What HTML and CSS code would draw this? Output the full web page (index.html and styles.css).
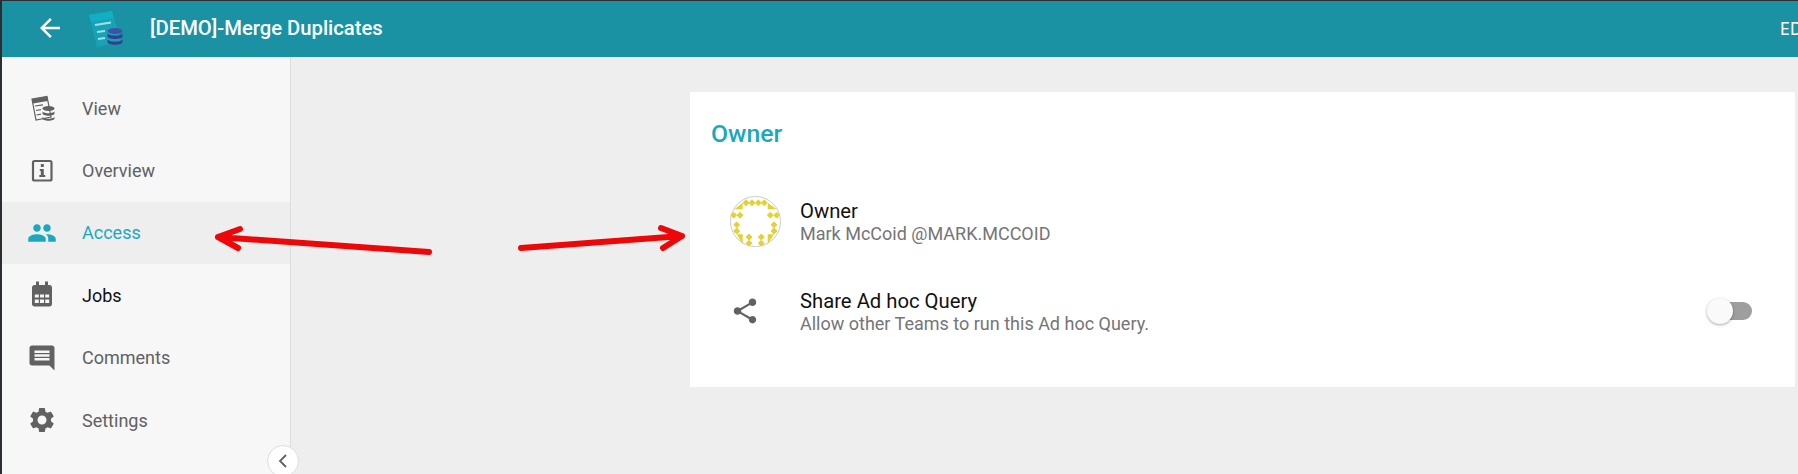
FILE: index.html
```html
<!DOCTYPE html>
<html lang="en">
<head>
  <meta charset="UTF-8">
  <meta name="viewport" content="width=device-width, initial-scale=1.0">
  <title>[DEMO]-Merge Duplicates</title>
  <link rel="stylesheet" href="styles.css">
</head>
<body>
  <header class="topbar">
    <svg class="back-icon" viewBox="0 0 24 24"><path d="M20 11H7.830l5.590-5.590L12 4l-8 8 8 8 1.410-1.410L7.830 13H20v-2z"/></svg>
    <svg class="logo" viewBox="0 0 36 36">
      <path class="logo-page" d="M1 4 24 0 33 31 9 36z"/>
      <path class="logo-head" d="M1 4 24 0 26 7 3 11z"/>
      <path class="logo-line" d="M7 14 23 11.500M9 21 17 20M10 28 17 27" />
      <ellipse class="logo-db-top" cx="27" cy="20" rx="7.500" ry="3"/>
      <path class="logo-db" d="M19.500 22v3.500c0 1.500 3.400 2.500 7.500 2.500s7.500-1 7.500-2.500V22c0 1.500-3.400 2.600-7.500 2.600s-7.500-1.100-7.500-2.600zM19.500 28v3c0 1.500 3.400 2.800 7.500 2.800s7.500-1.300 7.500-2.800v-3c0 1.500-3.400 2.600-7.500 2.600s-7.500-1.100-7.500-2.600z"/>
    </svg>
    <h1 class="page-title">[DEMO]-Merge Duplicates</h1>
    <span class="edit-btn">EDIT</span>
  </header>

  <div class="layout">
    <nav class="sidebar">
      <a class="nav-item">
        <svg class="nav-icon" viewBox="0 0 30 30">
          <path class="view-page" d="M5 6 20 3.500 24 24 9 27z"/>
          <path d="M5 6 20 3.500 20.800 8 5.800 10.500z"/>
          <path class="view-line" d="M8 13 16 11.800M9 17.500 14 16.700M9.500 22 14 21.200"/>
          <ellipse cx="21.500" cy="15.500" rx="6" ry="2.500"/>
          <path d="M15.500 18v2.500c0 1.300 2.700 2.200 6 2.200s6-.9 6-2.200V18c0 1.300-2.700 2.200-6 2.200s-6-.9-6-2.200zM15.500 23.500v2c0 1.300 2.700 2.200 6 2.200s6-.9 6-2.200v-2c0 1.300-2.700 2.200-6 2.200s-6-.9-6-2.200z"/>
        </svg>
        <span>View</span>
      </a>
      <a class="nav-item">
        <svg class="nav-icon" viewBox="0 0 30 30">
          <rect class="info-box" x="6" y="5" width="18.500" height="19.500" rx="1.500"/>
          <path d="M13.800 8h3v3h-3zM12.800 13h4v6h1.500v2h-6v-2h1.500v-4h-1z"/>
        </svg>
        <span>Overview</span>
      </a>
      <a class="nav-item active">
        <svg class="nav-icon" viewBox="0 0 24 24"><path d="M16 11c1.660 0 2.990-1.340 2.990-3S17.660 5 16 5c-1.660 0-3 1.340-3 3s1.340 3 3 3zm-8 0c1.660 0 2.990-1.340 2.990-3S9.660 5 8 5C6.340 5 5 6.340 5 8s1.340 3 3 3zm0 2c-2.330 0-7 1.170-7 3.500V19h14v-2.500c0-2.330-4.670-3.500-7-3.500zm8 0c-.29 0-.62.020-.97.050 1.160.84 1.970 1.970 1.970 3.450V19h6v-2.500c0-2.330-4.670-3.500-7-3.500z"/></svg>
        <span>Access</span>
      </a>
      <a class="nav-item jobs">
        <svg class="nav-icon" viewBox="0 0 30 30">
          <path fill-rule="evenodd" d="M9 1.500h3V5h6V1.500h3V5h1.500C23.900 5 25 6.100 25 7.500v16.500c0 1.400-1.100 2.500-2.500 2.500h-15C6.100 26.500 5 25.400 5 24v-16.500C5 6.100 6.100 5 7.500 5H9zM7.800 14.500v3h4v-3zm5.200 0v3h4v-3zm5.200 0v3h4v-3zM7.800 19.500v3.500h4v-3.500zm5.200 0v3.500h4v-3.500zm5.200 0v3.500h4v-3.500z"/>
        </svg>
        <span>Jobs</span>
      </a>
      <a class="nav-item">
        <svg class="nav-icon" viewBox="0 0 24 24"><path d="M21.990 4c0-1.100-.890-2-1.990-2H4c-1.100 0-2 .9-2 2v12c0 1.100.9 2 2 2h14l4 4-.01-18zM18 14H6v-2h12v2zm0-3H6V9h12v2zm0-3H6V6h12v2z"/></svg>
        <span>Comments</span>
      </a>
      <a class="nav-item">
        <svg class="nav-icon" viewBox="0 0 24 24"><path d="M19.140 12.940c.04-.3.060-.61.060-.94 0-.32-.02-.64-.07-.94l2.030-1.580c.18-.14.230-.41.120-.61l-1.920-3.320c-.12-.22-.37-.29-.59-.22l-2.390.96c-.5-.38-1.030-.7-1.620-.94l-.36-2.540c-.04-.24-.24-.41-.48-.41h-3.840c-.24 0-.43.170-.47.410l-.36 2.540c-.59.240-1.130.570-1.620.94l-2.390-.96c-.22-.08-.47 0-.59.220L2.740 8.870c-.12.210-.08.470.120.610l2.030 1.580c-.05.3-.09.630-.09.940s.02.640.07.940l-2.030 1.580c-.18.140-.23.410-.12.610l1.920 3.320c.12.220.37.290.59.220l2.390-.96c.5.380 1.030.7 1.620.94l.36 2.540c.05.240.24.410.48.410h3.840c.24 0 .44-.17.470-.41l.36-2.540c.59-.24 1.130-.56 1.620-.94l2.390.96c.22.080.47 0 .59-.22l1.920-3.320c.12-.22.070-.47-.12-.61l-2.010-1.580zM12 15.600c-1.980 0-3.600-1.620-3.600-3.600s1.620-3.600 3.600-3.600 3.600 1.620 3.600 3.600-1.620 3.600-3.600 3.600z"/></svg>
        <span>Settings</span>
      </a>
      <button class="collapse-btn" type="button">
        <svg viewBox="0 0 12 16"><path d="M9 2 3 8l6 6"/></svg>
      </button>
    </nav>

    <main class="content">
      <section class="card">
        <h2 class="card-title">Owner</h2>
        <div class="row">
          <div class="row-icon">
            <svg class="avatar" viewBox="0 0 51 51">
              <defs>
                <path id="dot" d="M-1 -3h2v1h1v1h1v2h-1v1h-1v1h-2v-1h-1v-1h-1v-2h1v-1h1z"/>
              </defs>
              <circle class="avatar-ring" cx="25.500" cy="25.500" r="25"/>
              <g class="avatar-art">
                <use href="#dot" x="16" y="6.700"/><use href="#dot" x="22" y="6.700"/>
                <use href="#dot" x="28.300" y="6.700"/><use href="#dot" x="34.300" y="6.700"/>
                <use href="#dot" x="3.700" y="19.300"/><use href="#dot" x="10" y="19.300"/>
                <use href="#dot" x="40.300" y="19.300"/><use href="#dot" x="46.700" y="19.300"/>
                <use href="#dot" x="6.700" y="28.700"/><use href="#dot" x="6.700" y="35"/>
                <use href="#dot" x="44" y="28.700"/><use href="#dot" x="44" y="35"/>
                <use href="#dot" x="19" y="41"/><use href="#dot" x="19" y="47.300"/>
                <use href="#dot" x="31.300" y="41"/><use href="#dot" x="31.300" y="47.300"/>
                <path d="M4.300 13.300 12.700 6.700v6.600zM37.700 6.700v6.600h9zM6.700 38.300h6v10zM37.700 38.300h6.300l-6.300 10z"/>
              </g>
            </svg>
          </div>
          <div class="row-text">
            <div class="row-title">Owner</div>
            <div class="row-sub">Mark McCoid @MARK.MCCOID</div>
          </div>
        </div>
        <div class="row">
          <div class="row-icon">
            <svg class="share-icon" viewBox="0 0 24 24"><path d="M18 16.080c-.76 0-1.440.3-1.960.770L8.910 12.700c.05-.23.090-.46.090-.7s-.04-.47-.09-.7l7.050-4.110c.54.5 1.250.81 2.040.81 1.660 0 3-1.340 3-3s-1.340-3-3-3-3 1.340-3 3c0 .24.040.47.090.7L8.040 9.810C7.500 9.310 6.790 9 6 9c-1.660 0-3 1.340-3 3s1.340 3 3 3c.79 0 1.500-.31 2.040-.81l7.120 4.160c-.05.21-.08.43-.08.65 0 1.610 1.310 2.920 2.920 2.920 1.610 0 2.920-1.310 2.920-2.920s-1.310-2.920-2.920-2.920z"/></svg>
          </div>
          <div class="row-text">
            <div class="row-title">Share Ad hoc Query</div>
            <div class="row-sub">Allow other Teams to run this Ad hoc Query.</div>
          </div>
          <div class="toggle"><span class="toggle-thumb"></span></div>
        </div>
      </section>
    </main>
  </div>

  <svg class="arrows" viewBox="0 0 1798 474">
    <path d="M429 252 218 237M240 229 218 237 238 248"/>
    <path d="M521 248 682 236M661 228 682 236 663 248"/>
  </svg>
</body>
</html>
```

FILE: styles.css
```css
html, body {
  height: 100%;
  overflow: hidden;
}
body {
  font-family: Roboto, "Liberation Sans", sans-serif;
  margin: 0;
  background-color: #eee;
  border-top: 1px solid #2b2f33;
  border-left: 2px solid #2b2f33;
  box-sizing: border-box;
  display: flex;
  flex-direction: column;
  position: relative;
}

.topbar {
  height: 56px;
  flex: none;
  background-color: #1a92a4;
  color: #fff;
  display: flex;
  align-items: center;
}
.back-icon {
  width: 30px;
  height: 30px;
  margin-left: 33px;
  margin-top: -2px;
  fill: #fff;
}
.logo {
  width: 36px;
  height: 36px;
  margin-left: 23px;
}
.logo-page { fill: #17a3b5; }
.logo-head { fill: #12aec4; }
.logo-line {
  stroke: #a5e0e6;
  stroke-width: 2;
  fill: none;
}
.logo-db-top { fill: #3f51a8; }
.logo-db { fill: #33408f; }
.page-title {
  margin: -2px 0 0 26px;
  font-size: 20.25px;
  font-weight: 500;
}
.edit-btn {
  margin-left: auto;
  margin-right: -21px;
  margin-top: -2px;
  font-size: 18px;
  font-family: "Noto Sans", sans-serif;
}

.layout {
  flex: 1;
  display: flex;
  min-height: 0;
}
.sidebar {
  width: 288px;
  flex: none;
  padding-top: 20px;
  background-color: #f7f7f7;
  border-right: 1px solid #ddd;
  position: relative;
}
.nav-item {
  height: 62.4px;
  padding-left: 25px;
  display: flex;
  align-items: center;
  color: #616161;
  font-size: 18px;
}
.nav-icon {
  width: 30px;
  height: 30px;
  margin-right: 25px;
  fill: #616161;
}
.view-page { fill: none; stroke: #616161; stroke-width: 1.2; }
.view-line { fill: none; stroke: #616161; stroke-width: 1.2; }
.info-box { fill: none; stroke: #616161; stroke-width: 2.2; }
.nav-item.active {
  background-color: #eee;
  color: #1ba8bf;
}
.nav-item.active .nav-icon { fill: #1ba8bf; }
.nav-item.jobs { color: #111; }
.collapse-btn {
  position: absolute;
  right: -9px;
  bottom: -3px;
  width: 32px;
  height: 32px;
  padding: 0;
  border: 1px solid #ddd;
  border-radius: 50%;
  background-color: #fff;
  display: flex;
  align-items: center;
  justify-content: center;
}
.collapse-btn svg {
  width: 12px;
  height: 16px;
  fill: none;
  stroke: #616161;
  stroke-width: 1.8;
}

.content {
  flex: 1;
  padding: 35px 3px 0 399px;
}
.card {
  height: 295px;
  box-sizing: border-box;
  padding: 20px 0 0 21px;
  background-color: #fff;
}
.card-title {
  margin: 0 0 20px;
  font-size: 24.75px;
  line-height: 44px;
  font-weight: 500;
  color: #1ba8bf;
}
.row {
  height: 90px;
  padding-right: 43px;
  display: flex;
  align-items: center;
}
.row-icon {
  width: 90px;
  padding-left: 19px;
  box-sizing: border-box;
  flex: none;
  display: flex;
  align-items: center;
}
.avatar {
  width: 51px;
  height: 51px;
}
.avatar-ring {
  fill: #fff;
  stroke: #ccc;
  stroke-width: 1;
}
.avatar-art { fill: #e4d234; }
.share-icon {
  width: 30px;
  height: 30px;
  fill: #616161;
}
.row-text {
  flex: 1;
  padding-top: 1px;
  margin-left: -1px;
}
.row-title {
  font-size: 20.25px;
  line-height: 24px;
  color: #111;
}
.row-sub {
  font-size: 18px;
  line-height: 22px;
  color: #757575;
}
.toggle {
  width: 40px;
  height: 18px;
  border-radius: 9px;
  background-color: #9e9e9e;
  position: relative;
}
.toggle-thumb {
  position: absolute;
  left: -5px;
  top: -4px;
  width: 26px;
  height: 26px;
  border-radius: 50%;
  background-color: #fafafa;
  box-shadow: 0 1px 3px rgba(0, 0, 0, 0.35);
}

.arrows {
  position: absolute;
  left: -2px;
  top: -1px;
  width: 1798px;
  height: 474px;
  fill: none;
  stroke: #ec0808;
  stroke-width: 6;
  stroke-linecap: round;
  stroke-linejoin: round;
  pointer-events: none;
}
```
